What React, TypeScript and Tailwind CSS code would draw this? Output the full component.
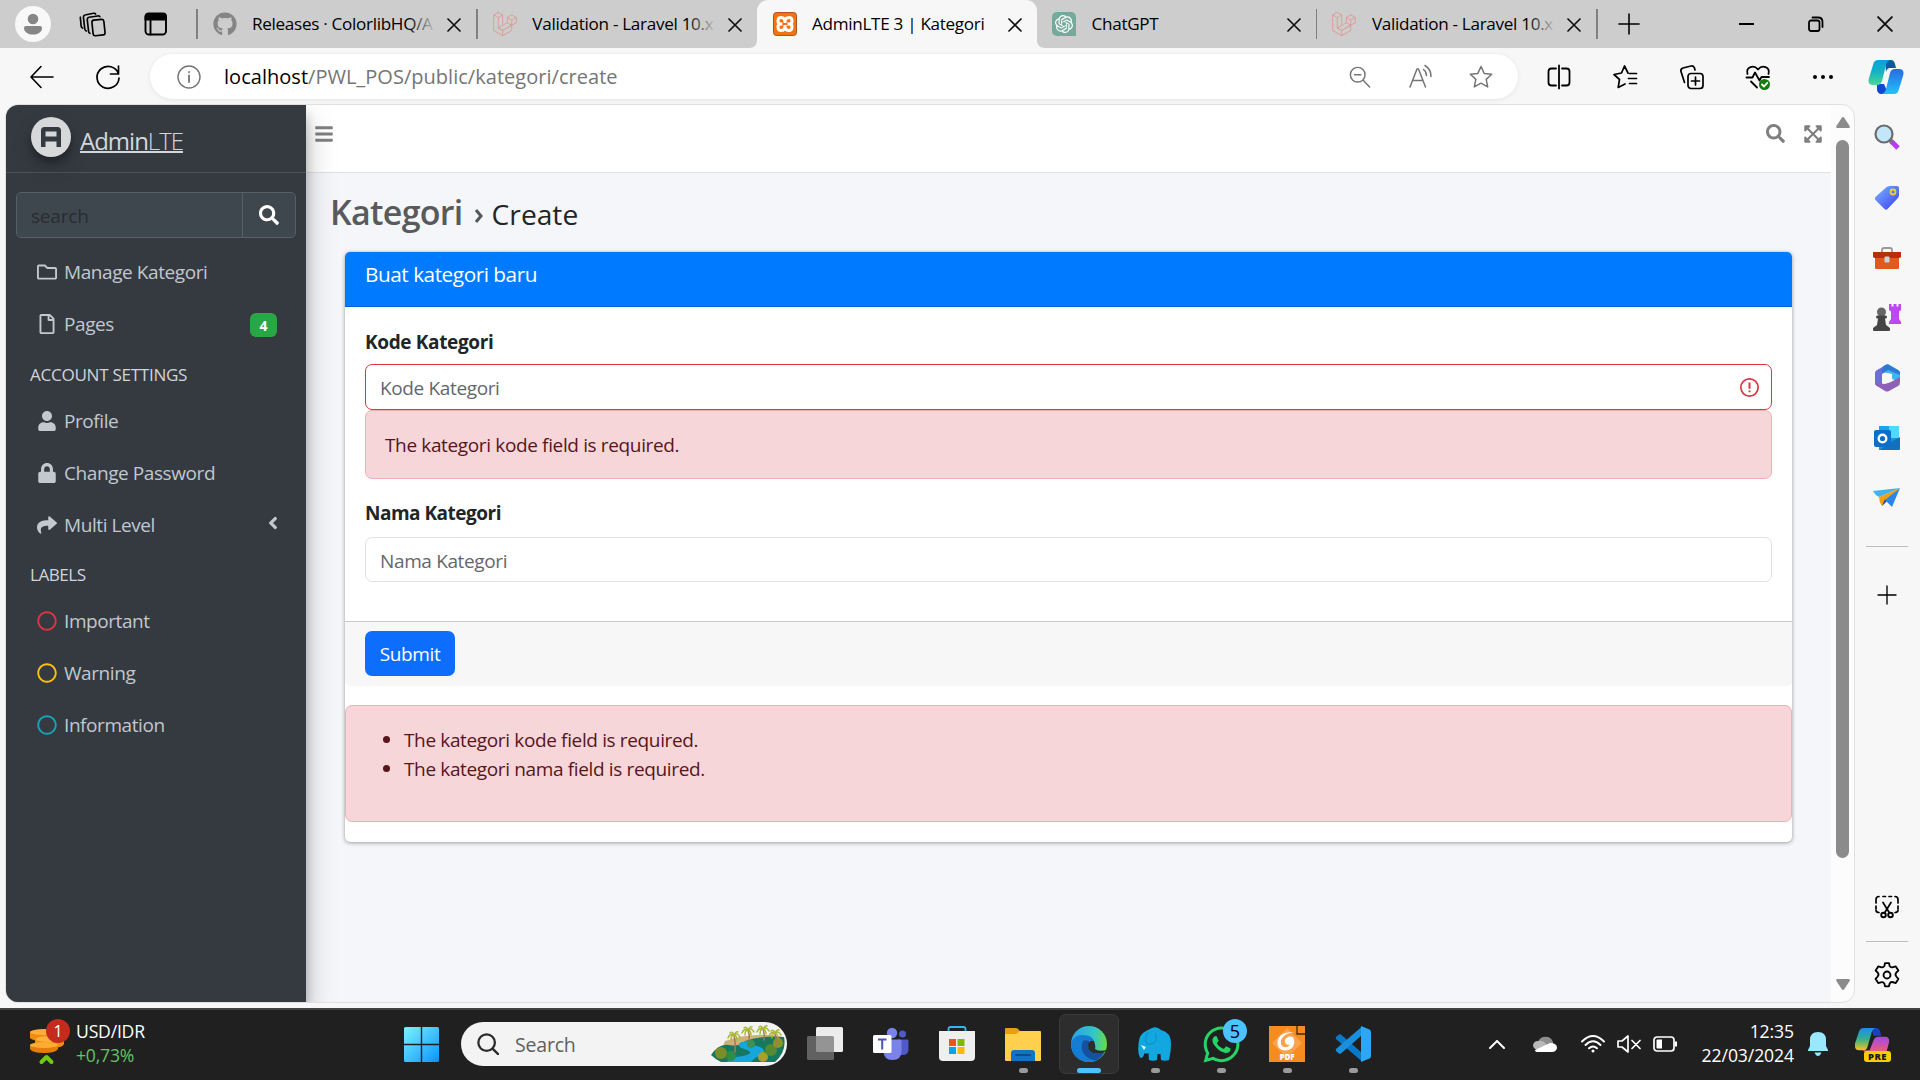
import type { ReactNode } from "react";
import {
  FaAngleLeft, FaBars, FaExpandArrowsAlt, FaGithub, FaLaravel, FaLock, FaRegCircle,
  FaRegFile, FaRegFolder, FaSearch, FaShare, FaUser, FaWhatsapp,
} from "react-icons/fa";
import { SiOpenai } from "react-icons/si";

type IconProps = { className?: string; children: ReactNode; sw?: number };

function Ico({ className = "size-6", children, sw = 1.5 }: IconProps) {
  return (
    <svg viewBox="0 0 24 24" className={`shrink-0 overflow-visible ${className}`} fill="none" stroke="currentColor" strokeWidth={sw} strokeLinecap="round" strokeLinejoin="round">
      {children}
    </svg>
  );
}

function Cross({ className = "size-[14px]" }: { className?: string }) {
  return (
    <svg viewBox="0 0 14 14" className={`shrink-0 ${className}`} stroke="#111" strokeWidth="1.7" strokeLinecap="round">
      <path d="M1 1 13 13M13 1 1 13" />
    </svg>
  );
}

function Tab({ icon, title, active, fade }: { icon: ReactNode; title: string; active?: boolean; fade?: boolean }) {
  return (
    <div
      className={
        active
          ? "relative flex h-12 w-[280.5px] shrink-0 items-center rounded-t-[11px] bg-[#f7f7f7] pl-4"
          : "relative flex h-12 w-[278.8px] shrink-0 items-center pl-[15px]"
      }
    >
      {active && (
        <>
          <svg className="absolute -left-2 bottom-0 size-2" viewBox="0 0 8 8"><path d="M8 0v8H0c5 0 8-3 8-8z" fill="#f7f7f7" /></svg>
          <svg className="absolute -right-2 bottom-0 size-2" viewBox="0 0 8 8"><path d="M0 0v8h8c-5 0-8-3-8-8z" fill="#f7f7f7" /></svg>
        </>
      )}
      <div className="flex size-6 shrink-0 items-center justify-center">{icon}</div>
      <div className="relative ml-[15.5px] w-[184px] overflow-hidden text-[17.1px] leading-6 tracking-[-0.3px] whitespace-nowrap">
        {title}
        {fade && <span className="absolute top-0 right-0 h-6 w-7 bg-gradient-to-r from-[#cdcdcd00] to-[#cdcdcd]" />}
      </div>
      <div className="ml-auto flex w-[39px] shrink-0 pt-0.5 pl-[10px]"><Cross /></div>
    </div>
  );
}

function Divider() {
  return <div className="h-[30px] w-[1.5px] shrink-0 bg-[#7f7f7f]" />;
}

function TabStrip() {
  return (
    <div className="flex h-12 items-center bg-[#cdcdcd] text-black">
      <div className="ml-[15px] flex size-9 items-center justify-center rounded-full bg-[#f8f8f8]">
        <svg viewBox="0 0 24 24" className="size-6" fill="#868686"><circle cx="12" cy="7" r="5.3" /><path d="M5 14h14a2 2 0 0 1 2 2c0 4-4 6.600-9 6.600S3 20 3 16a2 2 0 0 1 2-2z" /></svg>
      </div>
      <Ico className="ml-[29px] size-[25px]" sw={1.6}>
        <rect x="12" y="7.500" width="11.500" height="15" rx="2" transform="rotate(-6 17 15)" />
        <path d="M9.500 20.500Q8.500 20 8.300 19L7 7.500Q6.800 5.500 8.700 5L17 3.800Q18.500 3.600 19 4.500M6 18.200Q4.800 17.500 4.600 16.500L3.300 5Q3.200 3.300 4.800 2.900L13 1.200Q14.500 1 15 2M2.500 15.500Q1.300 14.800 1.100 13.500L.300 5" />
      </Ico>
      <Ico className="ml-[39px] size-[24px]" sw={1.9}>
        <rect x="1.500" y="2" width="20.500" height="20.500" rx="3.500" /><path d="M1.500 4.500q0-3 3.500-3h14q3 0 3 3v3H1.500z" fill="currentColor" /><path d="M6.500 7v15.500" />
      </Ico>
      <div className="ml-[28px]"><Divider /></div>
      <Tab icon={<FaGithub className="size-6 text-[#858585]" />} title="Releases · ColorlibHQ/A" fade />
      <Divider />
      <Tab icon={<FaLaravel className="size-6 text-[#e0938d]" />} title="Validation - Laravel 10.x" fade />
      <Tab
        active
        icon={
          <svg viewBox="0 0 24 24" className="size-6" fill="none">
            <rect x=".5" y=".5" width="23" height="23" rx="3" fill="#f47216" stroke="#b2541a" />
            <path d="M9.500 12H7.200a3 3 0 0 0-2.200 3.300q0 3.200 3 3.200 4 0 4-4.500V10q0-4.500-4-4.500-3 0-3 3.200A3 3 0 0 0 7.200 12M14.500 12h2.300A3 3 0 0 0 19 8.700q0-3.200-3-3.200-4 0-4 4.500v4q0 4.500 4 4.500 3 0 3-3.200A3 3 0 0 0 16.800 12z" stroke="#fff" strokeWidth="3" strokeLinejoin="round" />
            <path d="M9.500 12h5" stroke="#f47216" strokeWidth="2" />
          </svg>
        }
        title="AdminLTE 3 | Kategori"
      />
      <Tab icon={<span className="flex size-6 items-center justify-center rounded-[5px] rounded-br-none bg-[#74aa9c]"><SiOpenai className="size-[18px] text-white" /></span>} title="ChatGPT" />
      <Divider />
      <Tab icon={<FaLaravel className="size-6 text-[#e0938d]" />} title="Validation - Laravel 10.x" fade />
      <Divider />
      <Ico className="ml-[20px] size-[22px]" sw={1.7}><path d="M12 1v22M1 12h22" /></Ico>
      <div className="ml-auto flex items-center">
        <div className="h-[2px] w-[15px] bg-black" />
        <svg viewBox="0 0 16 16" className="ml-[54px] size-4" fill="none" stroke="#000" strokeWidth="1.800"><rect x="1" y="4.500" width="10.500" height="10.500" rx="2" /><path d="M4.500 1.500h5.500q4.500 0 4.500 4.500v5" strokeLinecap="round" /></svg>
        <Cross className="mr-[27px] ml-[53px] size-4" />
      </div>
    </div>
  );
}

const STAR = "M12 1.500l3.200 6.900 7.500.900-5.500 5.100 1.500 7.500-6.700-3.700-6.700 3.700 1.500-7.500L1.300 9.300l7.500-.900z";

function Toolbar() {
  return (
    <div className="flex h-[57px] items-center bg-[#f7f7f7]">
      <Ico className="ml-[30px] size-6" sw={1.6}><path d="M23 12H1.500M11 1.500 1 12l10 10.500" /></Ico>
      <Ico className="ml-[42px] size-[24px]" sw={1.7}><path d="M22.500 9A11 11 0 1 0 23 13M22.500 1v8h-8" /></Ico>
      <div className="ml-[30px] flex h-[45px] w-[1368px] shrink-0 items-center rounded-full bg-white text-[#757575] shadow-[0_1px_5px_rgba(0,0,0,0.08)]">
        <Ico className="ml-[27px] size-6" sw={1.4}><circle cx="12" cy="12" r="11" /><path d="M12 10.500v6.500M12 7v.300" strokeWidth="1.800" /></Ico>
        <div className="ml-[23px] text-[20px] leading-7 tracking-[0.03px]"><span className="text-black">localhost</span>/PWL_POS/public/kategori/create</div>
        <Ico className="ml-auto size-[22px]" sw={1.6}><circle cx="9.500" cy="9.500" r="8" /><path d="M15.500 15.500 22.500 23M6 9.500h7" /></Ico>
        <Ico className="ml-[38px] size-6" sw={1.5}><path d="m1 22 7-18h1.500l7 18M4 15.500h9.500M14.500 4.500c2 1.500 3 3.500 3 6M16 .500c4 2.500 6 6 6 11" /></Ico>
        <Ico className="mr-[25.5px] ml-[35.5px] size-6" sw={1.5}><path d={STAR} /></Ico>
      </div>
      <Ico className="ml-[29px] size-6" sw={1.8}><path d="M9 3.500H4.500q-3 0-3 3v11q0 3 3 3H9M15 3.500h4.500q3 0 3 3v11q0 3-3 3H15M12 .500v23" /></Ico>
      <Ico className="ml-[42px] size-6" sw={1.7}><path d="M15 8 11.500 1 8.500 8 1 9.500l5.500 5-1.300 8L12 19M16.500 8.500h7M15.500 13.500h8M16.500 18.500h7" /></Ico>
      <Ico className="ml-[43px] size-6" sw={1.7}><rect x="8" y="8.500" width="15" height="15" rx="3" /><path d="M15.500 12v8M11.500 16h8M4.500 17.500 1 6.500Q.200 4 3 3L11 1q2.500-.800 3.500 2l.500 2" /></Ico>
      <Ico className="ml-[42px] size-6" sw={1.8}>
        <path d="M1.500 9C-.500 1.500 8-.500 12 4.500 16-.500 24.500 1.500 22.500 9M.500 12.500h6l2.500-5 4.500 8 2-3.500H23M5 16.500l6 6" />
        <circle cx="18.500" cy="19.500" r="5.500" fill="#107c10" stroke="none" /><path d="m16 19.500 2 2 3.300-3.700" stroke="#fff" />
      </Ico>
      <div className="ml-[43px] flex gap-[4px]"><i className="size-1 rounded-full bg-black" /><i className="size-1 rounded-full bg-black" /><i className="size-1 rounded-full bg-black" /></div>
      <div className="ml-[35px]"><Copilot className="size-9" /></div>
    </div>
  );
}

function Copilot({ className }: { className: string }) {
  return (
    <svg viewBox="0 0 36 36" className={className}>
      <defs>
        <linearGradient id="cpa" x1="0" y1="0" x2="0" y2="1"><stop offset="0" stopColor="#0a9fe0" /><stop offset=".5" stopColor="#14b5c5" /><stop offset="1" stopColor="#4fd88c" /></linearGradient>
        <linearGradient id="cpb" x1="0" y1="0" x2="0" y2="1"><stop offset="0" stopColor="#2a6ae0" /><stop offset="1" stopColor="#20c2fb" /></linearGradient>
      </defs>
      <path d="M17 1h6q3 0 4 4l1 4h-6q-3 0-4 4z" fill="#0b5b9c" />
      <path d="M9 25h7l3 7-2 3h-4q-3 0-4-4z" fill="#1047d2" />
      <path d="M10 1h12q-3 1-4 5l-4 16q-1 4-5 4H5q-6 0-4-7L5 6q1-5 5-5z" fill="url(#cpa)" />
      <path d="M26 35H14q3-1 4-5l4-16q1-4 5-4h4q6 0 4 7l-4 13q-1 5-5 5z" fill="url(#cpb)" />
    </svg>
  );
}

function NavItem({ icon, label, right }: { icon: ReactNode; label: string; right?: ReactNode }) {
  return (
    <div className="mb-0.5 flex h-[50px] items-center pr-5 pl-[30px]">
      <span className="flex w-[22px] justify-center">{icon}</span>
      <span className="ml-[6px] text-[19px] leading-[30px] tracking-[-0.42px]">{label}</span>
      {right && <span className="ml-auto">{right}</span>}
    </div>
  );
}

function AdminSidebar() {
  return (
    <aside className="relative z-10 flex w-[300px] shrink-0 flex-col bg-[#343a40] text-[#c2c7d0] shadow-[0_14px_28px_rgba(0,0,0,0.25),0_10px_10px_rgba(0,0,0,0.22)]">
      <div className="flex h-[68px] shrink-0 border-b border-[#4b545c] pt-3 pl-[25px]">
        <div className="flex size-10 items-center justify-center rounded-full bg-[#d6d8da] shadow-[0_10px_20px_rgba(0,0,0,0.19),0_6px_6px_rgba(0,0,0,0.23)]">
          <svg viewBox="0 0 20 20" className="size-5" fill="#343a40"><path fillRule="evenodd" d="M3.500 0h13Q20 0 20 3.500V20h-4.500v-5.500h-11V20H0V3.500Q0 0 3.500 0zM4.500 4.500v5h11v-5z" /></svg>
        </div>
        <div className="mt-[8px] ml-[9px] h-[28px] border-b-2 border-[#d4d7da] text-[24px] leading-[31px] tracking-[-1px] text-[#d4d7da]">Admin<span className="font-light">LTE</span></div>
      </div>
      <div className="mx-[10px] mt-[19px] mb-[9px] flex h-[46px] shrink-0 rounded-[5px] border border-[#56606a] bg-[#3f474e]">
        <div className="flex w-[226px] items-center border-r border-[#56606a] pt-0.5 pl-[14px] text-[19px] tracking-[-0.2px] text-[#282d32]">search</div>
        <div className="flex flex-1 items-center justify-center text-white"><FaSearch className="size-5" /></div>
      </div>
      <NavItem icon={<FaRegFolder className="size-5" />} label="Manage Kategori" />
      <NavItem icon={<FaRegFile className="size-5" />} label="Pages" right={<span className="mt-0.5 mr-[9px] flex h-6 w-[27px] items-center justify-center rounded-[6px] bg-[#28a745] pt-px text-[14px] font-bold text-white">4</span>} />
      <div className="h-[45px] pt-[11px] pl-6 text-[17.100px] leading-[26px] tracking-[-0.300px] text-[#d0d4db]">ACCOUNT SETTINGS</div>
      <NavItem icon={<FaUser className="size-5" />} label="Profile" />
      <NavItem icon={<FaLock className="size-5" />} label="Change Password" />
      <NavItem icon={<FaShare className="size-5" />} label="Multi Level" right={<FaAngleLeft className="mr-[3px] mb-1 size-5" />} />
      <div className="h-[44px] pt-[10px] pl-6 text-[17.100px] leading-[26px] tracking-[-0.500px] text-[#d0d4db]">LABELS</div>
      <NavItem icon={<FaRegCircle className="size-5 text-[#dc3545]" />} label="Important" />
      <NavItem icon={<FaRegCircle className="size-5 text-[#ffc107]" />} label="Warning" />
      <NavItem icon={<FaRegCircle className="size-5 text-[#17a2b8]" />} label="Information" />
    </aside>
  );
}

function FormCard() {
  return (
    <section className="mt-[13px] mr-[39px] ml-[39px] h-[590px] rounded-[5px] bg-white text-[19px] leading-[30px] tracking-[-0.36px] text-[#212529] shadow-[0_0_1px_rgba(0,0,0,0.2),0_1px_4px_rgba(0,0,0,0.35)]">
      <div className="h-[55px] rounded-t-[5px] border-b border-[#0062cc] bg-[#007bff] pt-[7px] pl-5 text-[20.800px] tracking-[-0.480px] text-white">Buat kategori baru</div>
      <div className="px-5 pt-[18px]">
        <div className="mt-[2px] font-bold">Kode Kategori</div>
        <div className="mt-[7px] flex h-[46px] items-center rounded-[7px] border border-[#dc3545] pt-px pr-[12px] pl-[14px] text-[#62676c]">
          Kode Kategori
          <svg viewBox="0 0 18 18" className="mb-px ml-auto size-[19px]" fill="none" stroke="#dc3545" strokeWidth="1.600"><circle cx="9" cy="9" r="8.200" /><path d="M9 4.300v5.900M9 11.800v1.800" strokeWidth="1.900" /></svg>
        </div>
        <div className="flex h-[69px] items-center rounded-[7px] border border-[#f1aeb5] bg-[#f6d6d9] pl-[19px] text-[#58151c]">The kategori kode field is required.</div>
        <div className="mt-[19px] font-bold tracking-[-0.500px]">Nama Kategori</div>
        <div className="mt-[9px] flex h-[45px] items-center rounded-[7px] border border-[#dee2e6] pt-0.5 pl-[14px] text-[#62676c]">Nama Kategori</div>
      </div>
      <div className="mt-[39px] flex h-[65px] items-center rounded-b-[5px] border-t border-[#c9cacb] bg-[#f7f7f7] pb-0.5 pl-5">
        <button className="h-[45px] w-[90px] rounded-[7px] bg-[#0d6efd] pt-0.5 text-white">Submit</button>
      </div>
      <div className="mt-[19px] h-[117px] rounded-[7px] border border-[#f1aeb5] bg-[#f6d6d9] pt-[19px] text-[#58151c]">
        <ul>
          {["The kategori kode field is required.", "The kategori nama field is required."].map((t) => (
            <li key={t} className="flex h-[29.500px] items-center"><span className="mb-px ml-[37px] size-[7px] rounded-full bg-[#58151c]" /><span className="ml-[14px]">{t}</span></li>
          ))}
        </ul>
      </div>
    </section>
  );
}

function Page() {
  return (
    <div className="flex h-[897px] w-[1848px] shrink-0 overflow-hidden rounded-[12px] bg-[#f4f6f9] outline outline-[#e0e0e0]">
      <AdminSidebar />
      <main className="flex min-w-0 flex-1 flex-col">
        <div className="flex h-[68px] shrink-0 items-center justify-end border-b border-[#dee2e6] bg-white pr-[8px] pb-[10px] text-[#7f7f7f]">
          <FaBars className="mr-auto ml-[8px] size-[20px]" />
          <FaSearch className="size-[19px]" />
          <FaExpandArrowsAlt className="ml-[18px] size-[20px]" />
        </div>
        <h1 className="mt-[15px] mb-[3px] flex h-12 items-center pl-[24px] text-[#585a5c]">
          <span className="text-[34px] font-semibold tracking-[-0.700px]">Kategori</span>
          <svg viewBox="0 0 10 14" className="mt-[8px] ml-[11px] h-[14px] w-[10px]" fill="none" stroke="#55585b" strokeWidth="3"><path d="m2 1 5 6-5 6" /></svg>
          <span className="mt-[5px] ml-[8px] text-[28.200px] text-[#212529]">Create</span>
        </h1>
        <FormCard />
      </main>
      <div className="flex w-[23px] shrink-0 flex-col items-center bg-[#fcfcfc] py-3 text-[#8b8b8b]">
        <svg viewBox="0 0 14 11" className="h-[11px] w-[14px]" fill="currentColor"><path d="M5.800.800q1.200-1.400 2.400 0L13.600 9q.800 2-1 2H1.400q-1.800 0-1-2z" /></svg>
        <div className="mt-[12px] h-[718px] w-[13px] rounded-full bg-[#8b8b8b]" />
        <svg viewBox="0 0 14 11" className="mt-auto h-[11px] w-[14px] rotate-180" fill="currentColor"><path d="M5.800.800q1.200-1.400 2.400 0L13.600 9q.800 2-1 2H1.400q-1.800 0-1-2z" /></svg>
      </div>
    </div>
  );
}

function EdgeRail() {
  return (
    <div className="flex h-[898px] flex-1 flex-col items-center text-black">
      <svg viewBox="0 0 28 28" className="mt-[18px] size-7">
        <defs><linearGradient id="tg" x1="0" y1="0" x2="1" y2="1"><stop stopColor="#7ab6ff" /><stop offset="1" stopColor="#3a3df0" /></linearGradient></defs>
        <path d="m18 18 7 7" stroke="#b83bf0" strokeWidth="5" /><path d="m16 16 3 3" stroke="#777" strokeWidth="4" /><circle cx="11" cy="11" r="8.500" fill="#c4e6fb" stroke="#6b6b6b" strokeWidth="2.200" />
      </svg>
      <svg viewBox="0 0 28 28" className="mt-[33px] size-7"><path d="M13 3.500q1.500-1.500 4-1.500h7q2 0 2 2v7q0 2-1.500 3.500L14.500 25q-1.500 1.500-3 0L2.500 16q-1.500-1.500 0-3z" fill="url(#tg)" /><circle cx="20" cy="8" r="2.500" fill="none" stroke="#f8cf22" strokeWidth="1.800" /></svg>
      <svg viewBox="0 0 28 24" className="mt-[34px] h-6 w-7"><path d="M9 7V4q0-2 2-2h6q2 0 2 2v3" fill="none" stroke="#999" strokeWidth="1.800" /><path d="M0 6h28v5l-2 1v10q0 1-1 1H3q-1 0-1-1V12l-2-1z" fill="#e05a1e" /><path d="M0 6h28v5l-2 1H2l-2-1z" fill="#b52f0c" /><rect x="11.500" y="10.500" width="5" height="6" rx="1" fill="#cfd3d6" /></svg>
      <svg viewBox="0 0 28 28" className="mt-[34px] size-7"><path d="M16 0h2.500v2.500h2V0h3v2.500h2V0H28v6l-2 1.500V15l2 3v2H16v-2l2-3V7.500L16 6z" fill="#bb49ee" /><circle cx="8.500" cy="8" r="4.500" fill="#666" /><path d="M3 13q0-1.500 1.500-1.500h8Q14 11.500 14 13t-1.500 1.500H12L13 21l4 3v2q0 1-1 1H1q-1 0-1-1v-2l4-3 1-6.500h-.500Q3 14.500 3 13z" fill="#454545" /></svg>
      <svg viewBox="0 0 26 28" className="mt-[32px] h-7 w-[26px]">
        <path d="M8 3 14 0l10 6q2 1 2 3v9l-8-3V10L8 8z" fill="#3db5ee" /><path d="M12 1 3 6Q1 7 1 9v10q0 2 2 3l5 1V9l7-5V1q-1-1-3 0z" fill="#6d6fd9" /><path d="M1 19q0 2 2 3l8 5q2 1 4 0l9-5q2-1 2-4v-5l-9 5-6 2z" fill="#8f60b8" /><path d="M11 1q-3 2-3 5v4l6-4 12 5V9q0-2-2-3l-9-5q-2-1-4 0z" fill="#2f78d4" /><circle cx="13.500" cy="14" r="4.700" fill="#f7f7f7" />
      </svg>
      <svg viewBox="0 0 26 26" className="mt-[33px] size-[26px]"><path d="M5 1h20v24H5z" fill="#1e90df" /><path d="M15 1h10v12H15z" fill="#50d9ff" /><path d="M5 1h10v7H5z" fill="#1aa6e6" /><path d="m15 18 11-6v12q0 1-1 1H6z" fill="#1270bd" /><rect y="5" width="17" height="17" rx="2" fill="#0b6fc9" /><circle cx="8.500" cy="13.500" r="3.800" fill="none" stroke="#fff" strokeWidth="2.400" /></svg>
      <svg viewBox="0 0 28 20" className="mt-[37px] h-5 w-7"><path d="M0 3 27 0 6 9Q2 7 0 3z" fill="#3cb4f0" /><path d="M6 9 27 0 9 18Q6 14 6 9z" fill="#f0a010" /><path d="m9 18 5-5-2-2z" fill="#184ca8" /><path d="M12 12 27 0 19 19z" fill="#2a86ea" /></svg>
      <div className="mt-[38px] h-px w-[42px] bg-[#bdbdbd]" />
      <Ico className="mt-[39px] size-[18px]" sw={1.8}><path d="M12 0v24M0 12h24" /></Ico>
      <Ico className="mt-auto size-6" sw={1.9}>
        <path d="M1 8V4.500Q1 1.500 4 1.500M8 1.500h2.500M14 1.500h2.500M20 1.500q3 0 3 3V8M23 11v3M1 11v3M1 15.500q.500 2 3 2M23 15.500q-.500 2-3 2M8 7.500l6.500 10.500M16 7.500 9.500 18" strokeWidth="1.700" /><circle cx="8.500" cy="20" r="2.300" /><circle cx="15.500" cy="20" r="2.300" />
      </Ico>
      <div className="mt-[22px] h-px w-[42px] bg-[#bdbdbd]" />
      <Ico className="mt-[20px] mb-[15px] size-[26px]" sw={1.7}>
        <path d="M9.600 3.500 10.200 1h3.600l.600 2.500q1 2 3.300 1.300l2.400-.700 2.400 3.800-1.900 1.800q-1.500 1.800 0 3.700l1.900 2.200-2.400 3.800-2.400-.700q-2.300-.700-3.300 1.300l-.600 2.500h-3.600l-.600-2.500q-1-2-3.300-1.300l-2.400.700-2.400-3.800 1.900-2.200q1.500-1.900 0-3.700L1.500 7.900l2.400-3.800 2.400.700q2.300.700 3.300-1.300z" /><circle cx="12" cy="12" r="3.200" />
      </Ico>
    </div>
  );
}

function Task({ children, running, active }: { children: ReactNode; running?: boolean; active?: boolean }) {
  return (
    <div className={`relative flex size-[60px] shrink-0 items-center justify-center rounded-[7px] ${active ? "bg-[#2d2d2d] outline outline-[#3a3a3a] -outline-offset-1" : ""}`}>
      <div className="flex size-9 items-center justify-center">{children}</div>
      {running && <span className="absolute bottom-px h-[5px] w-[9px] rounded-full bg-[#9a9a9a]" />}
      {active && <span className="absolute bottom-px h-[5px] w-6 rounded-full bg-[#4cc2ff]" />}
    </div>
  );
}

function Palm({ x, y, h }: { x: number; y: number; h: number }) {
  return (
    <g transform={`translate(${x} ${y})`} fill="none" strokeLinecap="round">
      <path d={`M0 0q2 ${h / 2} 1 ${h}`} stroke="#a87850" strokeWidth="1.500" />
      <path d="M0 0q-4-2-6 3M0 0q-3 0-3 5M0 0q3-3 6 2M0 0q3 1 3 5M0 0q-2-4-4-2M0 0q2-4 4-3" stroke="#a9b838" strokeWidth="1.500" />
    </g>
  );
}

function Taskbar() {
  return (
    <footer className="flex h-[72px] items-center border-t-2 border-[#434343] bg-[#202020] pb-0.5 text-white">
      <div className="flex w-[404px] shrink-0 items-center pl-[30px]">
        <div className="relative mb-1 h-[46px] w-9 shrink-0">
          <svg viewBox="0 0 36 46" className="h-[46px] w-9">
            <path d="M0 13v6q2 3 14 3t14-3v-6z" fill="#ee8d12" /><path d="M5 20v5q2 4 15 4t14-4v-5z" fill="#f08f13" /><path d="M0 26v4q2 4 14 4t14-4v-4z" fill="#e77d09" />
            <ellipse cx="14" cy="13" rx="14" ry="3" fill="#ffad35" /><ellipse cx="20" cy="20" rx="14" ry="3" fill="#ffb33d" /><ellipse cx="14" cy="26" rx="14" ry="3" fill="#ffac33" />
            <path d="m11.500 43 5-5 5 5" stroke="#72c913" strokeWidth="4" fill="none" strokeLinecap="round" strokeLinejoin="round" />
          </svg>
          <span className="absolute top-0 left-[16px] flex size-6 items-center justify-center rounded-full bg-[#c42b1c] text-[16px]">1</span>
        </div>
        <div className="mb-0.5 ml-[10px] text-[17.600px] leading-6 tracking-[-0.200px]"><div>USD/IDR</div><div className="text-[#62c462]">+0,73%</div></div>
      </div>
      <svg viewBox="0 0 35 35" className="size-[35px] shrink-0">
        <defs><linearGradient id="win" x1="0" y1="0" x2="1" y2="1"><stop stopColor="#7df3ff" /><stop offset="1" stopColor="#0893ff" /></linearGradient></defs>
        <path d="M1.500 0H16.800V16.800H0V1.500Q0 0 1.500 0zM18.200 0h15.300Q35 0 35 1.500V16.800H18.200zM0 18.200h16.800V35H1.500Q0 35 0 33.500zM18.200 18.200H35v15.300q0 1.500-1.500 1.500H18.200z" fill="url(#win)" />
      </svg>
      <div className="ml-[22px] flex h-11 w-[326px] shrink-0 items-center overflow-hidden rounded-full bg-[#f3f3f3] text-[#606060]">
        <svg viewBox="0 0 24 24" className="ml-[16px] size-[22px]" fill="none" stroke="#2b2b2b" strokeWidth="2.500" strokeLinecap="round"><circle cx="10.500" cy="10.500" r="9" /><path d="m17 17 6 6" /></svg>
        <span className="ml-[16px] pt-px text-[19.500px] tracking-[-0.200px]">Search</span>
        <svg viewBox="0 0 75 38" className="mr-px ml-auto h-[38px] w-[75px]">
          <path d="M14 16Q45 6 72 12L70 24 10 26z" fill="#d0b078" />
          <path d="M0 30Q8 18 18 20T34 16Q50 10 73 12 76 26 64 37H10Q4 34 0 30z" fill="#16795f" />
          <path d="M30 17q-6 5 6 8 8 3-4 6-12 1-16 6h24q4-5 10-7 8-5-4-9-14-2-8-5z" fill="#16a6de" />
          <circle cx="10" cy="28" r="6" fill="#7d8d28" /><circle cx="20" cy="31" r="5" fill="#308b4a" /><circle cx="52" cy="32" r="5" fill="#a8a02a" /><circle cx="60" cy="25" r="6" fill="#578b32" /><circle cx="67" cy="18" r="5" fill="#88962b" /><circle cx="40" cy="19" r="4" fill="#3b9254" />
          <Palm x={23} y={10} h={17} /><Palm x={37} y={5} h={10} /><Palm x={52} y={4} h={11} /><Palm x={64} y={8} h={14} />
        </svg>
      </div>
      <div className="ml-[8px] flex gap-[6px]">
        <Task><svg viewBox="0 0 36 36" className="size-9"><rect x="9" y="1" width="27" height="25" rx="1.500" fill="#ececec" /><rect y="10" width="27" height="24" rx="1.500" fill="#777" fillOpacity=".75" /></svg></Task>
        <Task>
          <svg viewBox="0 0 36 36" className="size-9"><circle cx="29.500" cy="8" r="3.500" fill="#5059c9" /><path d="M25 13.500h9q1.500 0 1.500 1.500v8q0 6-6 6h-4.500z" fill="#5059c9" /><circle cx="19" cy="7" r="5.200" fill="#7b83eb" /><path d="M11 13.500h16q1.500 0 1.500 1.500v10q0 9-9 9t-9-9z" fill="#7b83eb" /><rect y="9" width="18.500" height="18" rx="1.500" fill="#fff" /><path d="M5 13.500h8.500M9.200 13.500v10" stroke="#4b53bc" strokeWidth="2" /></svg>
        </Task>
        <Task>
          <svg viewBox="0 0 36 36" className="size-9"><path d="M9.500 6V3q0-2 2-2h13q2 0 2 2v3" fill="none" stroke="#36b5ef" strokeWidth="1.800" /><path d="M0 5h36v26q0 4-4 4H4q-4 0-4-4z" fill="#efefef" /><path d="M10 13h7v7h-7z" fill="#f25022" /><path d="M18.500 13h7v7h-7z" fill="#7fba00" /><path d="M10 21h7v7h-7z" fill="#00a4ef" /><path d="M18.500 21h7v7h-7z" fill="#ffb900" /></svg>
        </Task>
        <Task running>
          <svg viewBox="0 0 36 36" className="size-9"><path d="M0 3q0-1 1-1h9q2 0 3 1l3 3v5H0z" fill="#e5a00d" /><path d="M0 8h11l4-3h20q1 0 1 1v28q0 1-1 1H1q-1 0-1-1z" fill="#ffd04e" /><path d="M6 35v-8q0-3 3-3h18q3 0 3 3v8z" fill="#1273c4" /><path d="M11 29h14" stroke="#0a4e91" strokeWidth="1.800" strokeLinecap="round" /></svg>
        </Task>
        <Task active>
          <svg viewBox="0 0 36 36" className="size-9">
            <defs><linearGradient id="ed" x1="0" y1=".5" x2="1" y2=".6"><stop stopColor="#2ba3e6" /><stop offset=".6" stopColor="#33c6c9" /><stop offset="1" stopColor="#68dd3f" /></linearGradient></defs>
            <circle cx="18" cy="18" r="18" fill="url(#ed)" /><path d="M0 18Q2 9 12 9q9 0 11 6-6-1-6 5 1 7 10 7 4 0 6-1-5 10-15 10Q1 35 0 18z" fill="#147cd1" /><path d="M12 15q-4 10 4 16 5 4 10 3 5-3 7.500-7.500Q24 30 19 25q-3-4 0-9-4-3-7-1z" fill="#1650a0" /><path d="M23 15q-5-1-6 4 0 9 10 8.500 5 0 7-2l3-1-1-.500q-9 2-12-1 1-3-1-8z" fill="#2d2d2d" />
          </svg>
        </Task>
        <Task running>
          <svg viewBox="0 0 36 36" className="size-9"><path d="M9 5q4-2 6-3 5-2 9 2 10 2 10 14 0 8-2 16-4 1.500-8 0l-.500-6h-3l-.500 6q-4 1.500-8 0l-.500-7q-2 1-4 0-1 5-4 5-3-4-2-14Q2 8 9 5z" fill="#13a7df" /><path d="M12 6q-6 6-2 12 7 1 9-4 1-4-1-7" fill="none" stroke="#0a95cb" strokeWidth="1.300" /><path d="m4 19 5 2-2 3z" fill="#eefaff" /></svg>
        </Task>
        <Task running>
          <FaWhatsapp className="size-[41px] shrink-0 text-[#25d366]" />
          <span className="absolute top-[5px] right-[4px] flex size-6 items-center justify-center rounded-full bg-[#4cc2ff] text-[18px] text-black">5</span>
        </Task>
        <Task running>
          <div className="relative flex size-9 items-end justify-center bg-[#f68b1f]">
            <svg viewBox="0 0 36 36" className="absolute inset-0 size-9"><path d="m18 2 15 15-15 15L3 17z" fill="#f9a44d" /><path d="M28 0v8h8" fill="none" stroke="#3b2a18" strokeWidth="1.300" /><path fillRule="evenodd" d="M26 7q-8-2-14 2-6 6-2 13 6 5 13 0 4-5 1-11-6-2-8 3-1 5 5 5-4 4-8 1-3-5 1-9 5-5 12-4z" fill="#fff" /></svg>
            <span className="relative mb-px text-[8px] leading-[9px] font-extrabold">PDF</span>
          </div>
        </Task>
        <Task running>
          <svg viewBox="0 0 36 36" className="size-9"><path d="m2 10 2-1.500q1-.500 2 0L27 27v8.500L1 13q-1-1.500 1-3z" fill="#0a78c8" /><path d="m2 26 2 1.500q1 .500 2 0L27 9V.500L1 23q-1 1.500 1 3z" fill="#1a8fdd" /><path d="M26 0l8.500 3.500Q36 4 36 6v24q0 2-1.500 2.500L26 36z" fill="#2ba7f3" /></svg>
        </Task>
      </div>
      <div className="ml-auto flex shrink-0 items-center">
        <svg viewBox="0 0 16 9" className="h-[9px] w-4" fill="none" stroke="#fff" strokeWidth="2" strokeLinecap="round"><path d="m1 8 7-7 7 7" /></svg>
        <svg viewBox="0 0 24 16" className="ml-[28px] h-4 w-6"><path d="M5 6a8 8 0 0 1 15 0v8H5z" fill="#8d8d8d" /><path d="M5 5q5-1 8 3l5 6H5q-5-1-5-5 1-4 5-4z" fill="#b8b8b8" /><path d="M2 14 17 7q7 0 7 5-1 4-5 4H5q-3 0-3-2z" fill="#fff" /></svg>
        <svg viewBox="0 0 24 18" className="ml-6 h-[18px] w-6" fill="none" stroke="#fff" strokeWidth="1.900" strokeLinecap="round"><path d="M1 6.500Q12-4.500 23 6.500M4.500 10q7.500-7.500 15 0M8 13.300q4-3.800 8 0" /><circle cx="12" cy="16" r="1.500" fill="#fff" stroke="none" /></svg>
        <svg viewBox="0 0 24 18" className="ml-3 h-[18px] w-6" fill="none" stroke="#fff" strokeWidth="1.700" strokeLinejoin="round" strokeLinecap="round"><path d="M1 6h4l6-5v16l-6-5H1zM15 5.500l8 8M23 5.500l-8 8" /></svg>
        <svg viewBox="0 0 24 16" className="ml-3 h-4 w-6" fill="none" stroke="#fff" strokeWidth="1.700"><rect x="1" y="1" width="20" height="14" rx="3" /><path d="M3.500 4.500q0-1 1-1H9v9H4.500q-1 0-1-1z" fill="#fff" stroke="none" /><path d="M23 5.500v5" strokeWidth="2.500" /></svg>
        <div className="mb-0.5 w-[117px] text-right text-[17.600px] leading-6 tracking-[-0.100px]"><div>12:35</div><div>22/03/2024</div></div>
        <svg viewBox="0 0 20 24" className="ml-[14px] h-6 w-5" fill="#98e8ff"><path d="M10 0q8 0 8 8v6l2 4v1H0v-1l2-4V8q0-8 8-8zM6.500 20.500h7Q12 24 10 24t-3.500-3.500z" /></svg>
        <div className="relative mr-[30px] ml-[27px] size-[35px]">
          <svg viewBox="0 0 36 36" className="size-[35px]">
            <defs><linearGradient id="pa" x1="0" y1="0" x2="0" y2="1"><stop stopColor="#1c8cf0" /><stop offset=".5" stopColor="#35b08c" /><stop offset="1" stopColor="#f5c51c" /></linearGradient><linearGradient id="pb" x1="0" y1="0" x2="0" y2="1"><stop stopColor="#a048e8" /><stop offset="1" stopColor="#f6606c" /></linearGradient></defs>
            <path d="M17 1h5q3 0 4 4l1 4h-8z" fill="#1c3fc4" /><path d="M9 1h12q-3 1-4 5l-4 14q-1 4-5 4H4q-5 0-4-7L4 5q1-4 5-4z" fill="url(#pa)" /><path d="M8 24h7l4-10q1-4 5-4h7q5 0 4 6l-3 11H13q-3 0-5-3z" fill="url(#pb)" />
          </svg>
          <span className="absolute -right-px bottom-0 h-[11px] w-[27px] rounded-[3px] bg-[#ffcb05] text-center text-[9.500px] leading-[11px] font-extrabold tracking-[0.500px] text-[#1b1b1b]">PRE</span>
        </div>
      </div>
    </footer>
  );
}

export default function App() {
  return (
    <div className="flex h-[1080px] w-[1920px] flex-col overflow-hidden bg-[#f7f7f7] font-['Open_Sans',sans-serif]">
      <TabStrip />
      <Toolbar />
      <div className="flex h-[903px] shrink-0 pl-[6px]">
        <Page />
        <EdgeRail />
      </div>
      <Taskbar />
    </div>
  );
}
